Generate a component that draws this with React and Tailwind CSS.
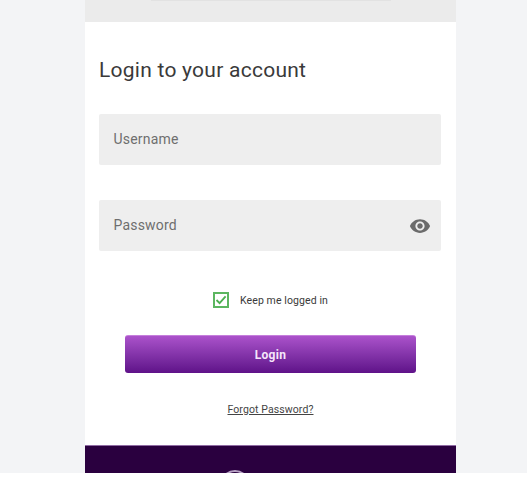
import React from "react";

const App = () => {
  return (
    <div className="h-[492px] w-[527px] overflow-hidden bg-white font-['Roboto',sans-serif]">
      <div className="h-[473px] overflow-hidden bg-[#f3f4f6] pl-[85px]">
        <div className="flex h-full w-[371px] flex-col bg-white">
          {/* Top bar */}
          <div className="flex h-[22px] shrink-0 justify-center bg-[#ebebeb]">
            <div className="h-px w-[240px] bg-[#e2e2e2]" />
          </div>

          {/* Form */}
          <div className="flex flex-1 flex-col px-[14px]">
            <h1 className="mt-[33px] text-[21px] leading-[30px] tracking-[0.25px] text-[#3a3a3a]">
              Login to your account
            </h1>

            <div className="mt-[29px] flex h-[51px] w-[342px] items-center rounded-[2px] bg-[#eeeeee] px-[14.5px] text-[14px] tracking-[0.2px] text-[#6e6e6e]">
              Username
            </div>

            <div className="mt-[35px] flex h-[51px] w-[342px] items-center justify-between rounded-[2px] bg-[#eeeeee] pl-[14.5px] pr-[10px] text-[14px] tracking-[0.2px] text-[#6e6e6e]">
              <span>Password</span>
              <svg width="22" height="22" viewBox="0 0 24 24" fill="#6b6b6b">
                <path d="M12 4.5C7 4.5 2.73 7.61 1 12c1.73 4.39 6 7.5 11 7.5s9.27-3.11 11-7.5c-1.73-4.39-6-7.5-11-7.5zM12 17c-2.76 0-5-2.24-5-5s2.24-5 5-5 5 2.24 5 5-2.24 5-5 5zm0-8c-1.66 0-3 1.34-3 3s1.34 3 3 3 3-1.34 3-3-1.34-3-3-3z" />
              </svg>
            </div>

            <div className="mt-[41px] flex items-center pl-[114px]">
              <div className="flex h-4 w-4 items-center justify-center border-2 border-[#5cb660]">
                <svg width="12" height="12" viewBox="0 0 12 12" fill="none" stroke="#4caf50" strokeWidth="1.8">
                  <path d="M1.5 6 4.6 9.2 10.6 2.4" />
                </svg>
              </div>
              <span className="relative top-px ml-[11px] text-[10.5px] tracking-[0.1px] text-[#3a3a3a]">
                Keep me logged in
              </span>
            </div>

            <button className="ml-[26px] mt-[27px] h-[38px] w-[291px] rounded-[3px] border-t border-[#c57fdc] bg-gradient-to-b from-[#ab52cb] to-[#5f1189] text-[12px] font-bold tracking-[0.3px] text-[#f5e6fb]">
              Login
            </button>

            <a className="mt-[30px] self-center text-[10.5px] leading-[14px] tracking-[0.1px] text-[#444444] underline">
              Forgot Password?
            </a>
          </div>

          {/* Footer */}
          <div className="relative h-[28px] shrink-0 overflow-hidden border-t border-[#8f6ba3] bg-[#2a003f]">
            <div className="absolute left-[135px] top-[24px] h-[30px] w-[30px] rounded-full border-2 border-[#b9a3c6]" />
          </div>
        </div>
      </div>
    </div>
  );
};

export default App;
